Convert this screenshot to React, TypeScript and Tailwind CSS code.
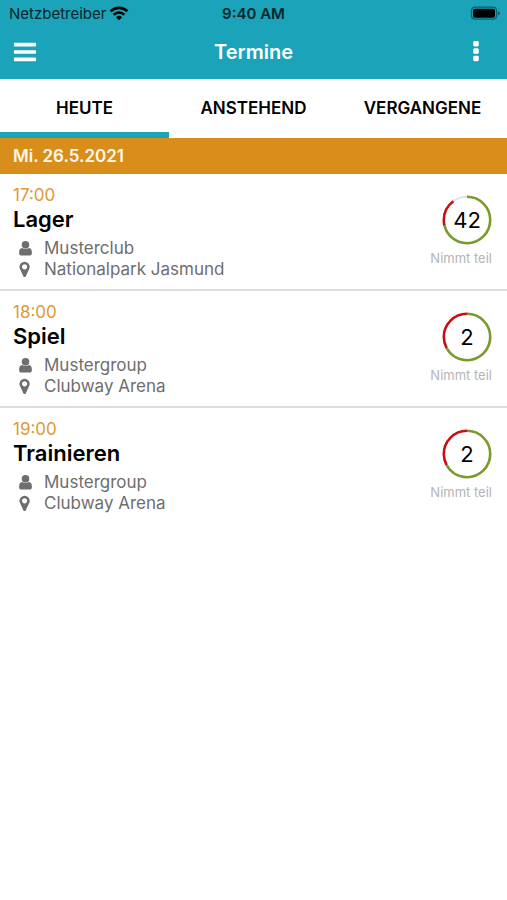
import React, { useState } from "react";

interface Appointment {
  time: string;
  title: string;
  group: string;
  place: string;
  count: number;
  accepted: number;
  declined: number;
}

const TABS = ["HEUTE", "ANSTEHEND", "VERGANGENE"];

// accepted / declined are percentages of all members
const APPOINTMENTS: Appointment[] = [
  {
    time: "17:00",
    title: "Lager",
    group: "Musterclub",
    place: "Nationalpark Jasmund",
    count: 42,
    accepted: 71,
    declined: 19,
  },
  {
    time: "18:00",
    title: "Spiel",
    group: "Mustergroup",
    place: "Clubway Arena",
    count: 2,
    accepted: 67,
    declined: 33,
  },
  {
    time: "19:00",
    title: "Trainieren",
    group: "Mustergroup",
    place: "Clubway Arena",
    count: 2,
    accepted: 67,
    declined: 33,
  },
];

const WifiIcon = () => (
  <svg className="w-5 h-4" viewBox="0 0 20 16" fill="none" aria-hidden="true">
    <path d="M1.6 5.3a12 12 0 0 1 16.8 0" stroke="currentColor" strokeWidth="2.8" />
    <path d="M4.7 8.7a7.6 7.6 0 0 1 10.6 0" stroke="currentColor" strokeWidth="2.6" />
    <path d="M10 14.3 7 11.2a4.3 4.3 0 0 1 6 0z" fill="currentColor" />
  </svg>
);

const BatteryIcon = () => (
  <svg className="w-8 h-4" viewBox="0 0 32 16" aria-hidden="true">
    <rect
      x="3.5"
      y="1.2"
      width="25"
      height="12"
      rx="3.5"
      fill="none"
      stroke="#0b5f6c"
      strokeWidth="1.2"
    />
    <rect x="5" y="2.700" width="22" height="9" rx="2" fill="#000" />
    <path d="M29.900 5v4.400q1.900-.7 1.900-2.200t-1.900-2.200z" fill="#0b5f6c" />
  </svg>
);

const BarsIcon = () => (
  <svg className="w-6 h-6" viewBox="64 64 1664 1664" fill="currentColor">
    <path d="M1664 1344v128q0 26-19 45t-45 19h-1408q-26 0-45-19t-19-45v-128q0-26 19-45t45-19h1408q26 0 45 19t19 45zm0-512v128q0 26-19 45t-45 19h-1408q-26 0-45-19t-19-45v-128q0-26 19-45t45-19h1408q26 0 45 19t19 45zm0-512v128q0 26-19 45t-45 19h-1408q-26 0-45-19t-19-45v-128q0-26 19-45t45-19h1408q26 0 45 19t19 45z" />
  </svg>
);

const DotsIcon = () => (
  <svg className="w-6 h-6" viewBox="64 64 1664 1664" fill="currentColor">
    <path d="M1088 1248v192q0 40-28 68t-68 28h-192q-40 0-68-28t-28-68v-192q0-40 28-68t68-28h192q40 0 68 28t28 68zm0-512v192q0 40-28 68t-68 28h-192q-40 0-68-28t-28-68v-192q0-40 28-68t68-28h192q40 0 68 28t28 68zm0-512v192q0 40-28 68t-68 28h-192q-40 0-68-28t-28-68v-192q0-40 28-68t68-28h192q40 0 68 28t28 68z" />
  </svg>
);

const UserIcon = () => (
  <svg
    className="w-[18px] h-[18px]"
    viewBox="0 0 18 18"
    fill="currentColor"
    aria-hidden="true"
  >
    <circle cx="6.5" cy="4.8" r="3.8" />
    <path d="M3.200 7.900Q6.500 9.700 9.800 7.900q3.100.3 3.100 4.800 0 2.800-2 2.800H2.100Q.1 15.500.1 12.700.1 8.200 3.200 7.900z" />
  </svg>
);

const MarkerIcon = () => (
  <svg
    className="w-[18px] h-[18px]"
    viewBox="340 60 1792 1792"
    fill="currentColor"
    aria-hidden="true"
  >
    <path d="M1152 640q0-106-75-181t-181-75-181 75-75 181 75 181 181 75 181-75 75-181zm256 0q0 109-33 179l-364 774q-16 33-47.5 52t-67.5 19-67.5-19-46.5-52l-365-774q-33-70-33-179 0-212 150-362t362-150 362 150 150 362z" />
  </svg>
);

const AttendanceRing: React.FC<{
  count: number;
  accepted: number;
  declined: number;
}> = ({ count, accepted, declined }) => (
  <div className="grid place-items-center">
    <svg
      className="col-start-1 row-start-1 w-[50px] h-[50px] -rotate-90"
      viewBox="0 0 50 50"
      fill="none"
      strokeWidth="2.6"
      aria-hidden="true"
    >
      <circle cx="25" cy="25" r="23.2" stroke="#e2e2e6" strokeWidth="2" />
      <circle
        cx="25"
        cy="25"
        r="23.2"
        stroke="#c90d12"
        pathLength={100}
        strokeDasharray={`${declined} 100`}
        strokeDashoffset={-accepted}
      />
      <circle
        cx="25"
        cy="25"
        r="23.2"
        stroke="#7a9a2b"
        pathLength={100}
        strokeDasharray={`${accepted} 100`}
      />
    </svg>
    <span className="col-start-1 row-start-1 text-[22px] leading-6 text-black">
      {count}
    </span>
  </div>
);

const AppointmentRow: React.FC<{ item: Appointment }> = ({ item }) => (
  <li className="flex justify-between pl-[13px] pr-[15px] pt-[10px] pb-[9px] border-b-2 border-[#dcdcdc] last:border-b-0">
    <div>
      <p className="text-[17px] leading-[22px] text-[#dd9a35]">{item.time}</p>
      <h2 className="text-[22px] leading-[26px] font-semibold text-black">
        {item.title}
      </h2>
      <div className="mt-[6px] pl-[6px] text-[17px] leading-[21px] text-[#6e6e6e]">
        <p className="flex items-center gap-[7px]">
          <UserIcon />
          {item.group}
        </p>
        <p className="flex items-center gap-[7px]">
          <MarkerIcon />
          {item.place}
        </p>
      </div>
    </div>
    <div className="flex flex-col items-end pt-[11px]">
      <AttendanceRing
        count={item.count}
        accepted={item.accepted}
        declined={item.declined}
      />
      <span className="mt-[5px] text-[13px] leading-4 text-[#b4b4b4]">
        Nimmt teil
      </span>
    </div>
  </li>
);

export default function App() {
  const [activeTab, setActiveTab] = useState("HEUTE");

  return (
    <div className="min-h-screen bg-white font-['Inter',sans-serif]">
      <header className="bg-[#1aa3b9]">
        <div className="grid grid-cols-[1fr_auto_1fr] items-center h-[27px] px-[7px] text-[15px] leading-5 text-[#06262c]">
          <div className="flex items-center gap-[3px] pl-[2px]">
            <span>Netzbetreiber</span>
            <span className="text-black">
              <WifiIcon />
            </span>
          </div>
          <span className="font-semibold">9:40 AM</span>
          <div className="flex justify-end">
            <BatteryIcon />
          </div>
        </div>
        <div className="grid grid-cols-[1fr_auto_1fr] items-center h-[52px] px-[13px] pb-[2px] text-white">
          <button type="button" aria-label="Menü" className="justify-self-start">
            <BarsIcon />
          </button>
          <h1 className="text-[20px] leading-6 font-semibold">Termine</h1>
          <button
            type="button"
            aria-label="Mehr"
            className="justify-self-end mr-[6px]"
          >
            <DotsIcon />
          </button>
        </div>
      </header>

      <nav className="grid grid-cols-3">
        {TABS.map((tab) => (
          <button
            key={tab}
            type="button"
            onClick={() => setActiveTab(tab)}
            className={`h-[59px] border-b-6 pt-[6px] text-[17px] font-semibold text-black ${
              tab === activeTab ? "border-[#1aa3b9]" : "border-transparent"
            }`}
          >
            {tab}
          </button>
        ))}
      </nav>

      <div className="h-9 px-[13px] bg-[#d98e1b] text-[17px] leading-9 font-semibold text-[#fff8ea]">
        Mi. 26.5.2021
      </div>

      <ul>
        {APPOINTMENTS.map((item) => (
          <AppointmentRow key={item.time} item={item} />
        ))}
      </ul>
    </div>
  );
}
